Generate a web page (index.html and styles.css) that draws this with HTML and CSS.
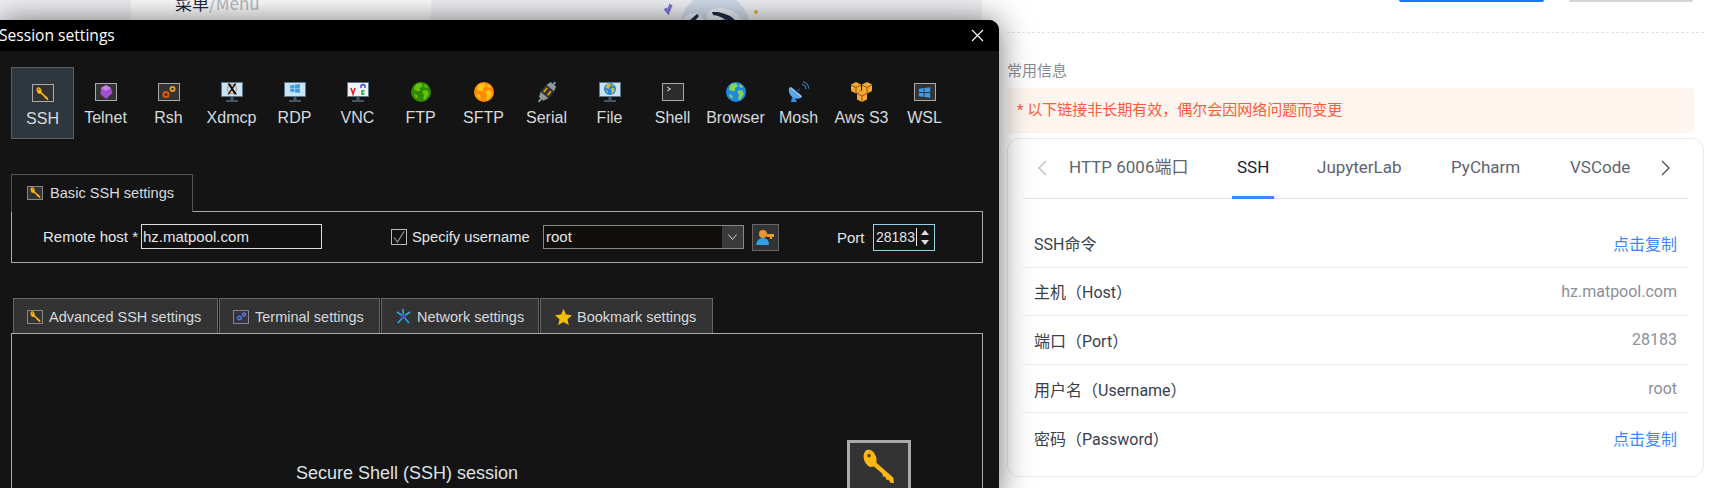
FILE: index.html
```html
<!DOCTYPE html>
<html lang="zh-CN">
<head>
    <meta charset="UTF-8">
    <title>Session settings</title>
    <link rel="stylesheet" href="styles.css">
</head>
<body>
    <svg class="defs" width="0" height="0">
        <symbol id="key" viewBox="0 0 16 16">
            <ellipse cx="3.800" cy="4.400" rx="2.900" ry="4.200" transform="rotate(-18 3.800 4.400)" fill="#fdb813"/>
            <path d="M4.800 7.500 6.500 6.200 14.800 13.500 15 16 13.500 16 12.500 14.500 11.500 14.500 11 13 10 13 9.500 11.500Z" fill="#fdb813"/>
            <circle cx="3.300" cy="3.100" r=".9" fill="#6b4a00"/>
        </symbol>
        <symbol id="win" viewBox="0 0 16 16">
            <path d="M1 3.500 7 2.600V7.500H1ZM8 2.400 15 1.400V7.500H8ZM1 8.500H7V13.400L1 12.500ZM8 8.500H15V14.600L8 13.600Z" fill="#3a9bec"/>
        </symbol>
        <symbol id="monitor" viewBox="0 0 22 20">
            <rect x="0" y="0" width="22" height="15" fill="#5e7685"/>
            <rect x="1" y="1" width="20" height="13" fill="#c6e4f8"/>
            <rect x="9.500" y="15" width="3" height="3" fill="#44565f"/>
            <rect x="5" y="18" width="12" height="2" fill="#44565f"/>
        </symbol>
        <symbol id="globe" viewBox="0 0 20 20">
            <circle cx="10" cy="10" r="10" fill="currentColor"/>
            <path d="M5 2 10 1 12 4 9 6 9 9 5 9 3 7ZM11 9 16 8 18 12 14 18 12 17 13 13ZM14 2 17 5 15 6 13 4ZM3 12 6 13 7 17 4 15Z" fill="var(--land)"/>
        </symbol>
    </svg>

    <div class="page-left">
        <div class="menu-card"><span class="menu-zh">菜单</span><span class="menu-en">/Menu</span></div>
        <svg class="art" width="120" height="22" viewBox="0 0 120 22">
            <path d="M25 8.500 28 12 31 4.500" fill="none" stroke="#8076dc" stroke-width="3.400"/>
            <circle cx="75" cy="28" r="35" fill="#d3deee"/>
            <path d="M42 22Q45 12 56 14 64 15 63 22Z" fill="#eef2f8"/>
            <path d="M67 14Q70 7 82 8 97 10 103 22H70Q66 18 67 14Z" fill="#eef2f8"/>
            <path d="M49 21 57 14 59 16 54 22Z" fill="#232c4a"/>
            <path d="M72 12 78 12Q90 14 97 22H88Q82 16 73 15Z" fill="#232c4a"/>
            <path d="M78 22Q82 18 88 20L90 22Z" fill="#2fb8b0"/>
            <circle cx="116" cy="12" r="2" fill="#e8b23c"/>
        </svg>
    </div>

    <main class="page-right">
        <div class="top-btns">
            <span class="top-btn blue"></span>
            <span class="top-btn grey"></span>
        </div>
        <div class="dashed"></div>
        <h3 class="info-title">常用信息</h3>
        <div class="warn">* 以下链接非长期有效，偶尔会因网络问题而变更</div>
        <section class="card">
            <div class="tabs">
                <svg class="chev" width="12" height="18" viewBox="0 0 12 18"><path d="M10 2 3 9 10 16" fill="none" stroke="#b8bcc4" stroke-width="1.400"/></svg>
                <span class="tab t-http">HTTP 6006端口</span>
                <span class="tab t-ssh active">SSH</span>
                <span class="tab t-jup">JupyterLab</span>
                <span class="tab t-py">PyCharm</span>
                <span class="tab t-vs">VSCode</span>
                <svg class="chev next" width="12" height="18" viewBox="0 0 12 18"><path d="M2 2 9 9 2 16" fill="none" stroke="#4b5563" stroke-width="1.400"/></svg>
            </div>
            <div class="rows">
                <div class="row"><span>SSH命令</span><a class="copy">点击复制</a></div>
                <div class="row"><span>主机（Host）</span><span class="val">hz.matpool.com</span></div>
                <div class="row"><span>端口（Port）</span><span class="val">28183</span></div>
                <div class="row"><span>用户名（Username）</span><span class="val">root</span></div>
                <div class="row"><span>密码（Password）</span><a class="copy">点击复制</a></div>
            </div>
        </section>
    </main>

    <div class="dialog">
        <header class="titlebar">
            <span class="title">Session settings</span>
            <svg class="close" width="13" height="13" viewBox="0 0 13 13"><path d="M1 1 12 12M12 1 1 12" stroke="#fff" stroke-width="1.100"/></svg>
        </header>
        <div class="body">
            <nav class="tools">
                <div class="tool on">
                    <span class="ico"><span class="box"><svg width="13" height="13"><use href="#key"/></svg></span></span>
                    <span class="lbl">SSH</span>
                </div>
                <div class="tool">
                    <span class="ico"><span class="box"><svg width="14" height="14" viewBox="0 0 14 14"><path d="M7 0 12 3 13.500 8 7 14 1.500 9 2 3Z" fill="#a24fd0"/><path d="M7 0 12 3 7 6 2 3Z" fill="#c583e6"/></svg></span></span>
                    <span class="lbl">Telnet</span>
                </div>
                <div class="tool">
                    <span class="ico"><span class="box"><svg width="18" height="14" viewBox="0 0 18 14"><circle cx="6" cy="9.500" r="2.600" fill="none" stroke="#e2570f" stroke-width="2"/><circle cx="12.500" cy="4" r="2.100" fill="none" stroke="#f0a020" stroke-width="1.800"/></svg></span></span>
                    <span class="lbl">Rsh</span>
                </div>
                <div class="tool">
                    <span class="ico"><svg class="mon" width="22" height="20"><use href="#monitor"/></svg>
                        <svg class="on-screen" width="16" height="12" viewBox="0 0 16 11"><circle cx="8" cy="5.500" r="4.600" fill="none" stroke="#e8905a" stroke-width="1.200"/><path d="M3.500 0 6 0 13 11 10.500 11ZM10.500 0 12.500 0 5 11 3.500 11Z" fill="#111"/></svg></span>
                    <span class="lbl">Xdmcp</span>
                </div>
                <div class="tool">
                    <span class="ico"><svg class="mon" width="22" height="20"><use href="#monitor"/></svg>
                        <svg class="on-screen" width="11" height="11"><use href="#win"/></svg></span>
                    <span class="lbl">RDP</span>
                </div>
                <div class="tool">
                    <span class="ico"><svg class="mon" width="22" height="20"><use href="#monitor"/></svg>
                        <svg class="on-screen" width="20" height="13" viewBox="0 0 20 13"><rect width="20" height="13" fill="#eef4fa"/><path d="M3 5 5 11 7 5" fill="none" stroke="#e02020" stroke-width="1.600"/><path d="M13 5V2.500Q15 .8 17 2.500V5" fill="none" stroke="#3a50e0" stroke-width="1.500"/><path d="M16.500 8H14V11H16.500" fill="none" stroke="#20a020" stroke-width="1.500"/></svg></span>
                    <span class="lbl">VNC</span>
                </div>
                <div class="tool">
                    <span class="ico"><svg class="globe g-ftp" width="20" height="20"><use href="#globe"/></svg></span>
                    <span class="lbl">FTP</span>
                </div>
                <div class="tool">
                    <span class="ico"><svg class="globe g-sftp" width="20" height="20"><use href="#globe"/></svg></span>
                    <span class="lbl">SFTP</span>
                </div>
                <div class="tool">
                    <span class="ico"><svg width="24" height="24" viewBox="0 0 24 24"><g transform="rotate(40 12 12)"><path d="M11 -1H13V2H15.500L17 7H7L8.500 2H11Z" fill="#8d979e"/><rect x="6.500" y="7" width="11" height="9" fill="#2f3438"/><path d="M9.500 9V14M14.500 9V14" stroke="#f2a100" stroke-width="1.600"/><path d="M7 16H17L15 21H13V25H11V21H9Z" fill="#8d979e"/></g></svg></span>
                    <span class="lbl">Serial</span>
                </div>
                <div class="tool">
                    <span class="ico"><svg class="mon" width="22" height="20"><use href="#monitor"/></svg>
                        <svg class="globe g-file on-screen" width="12" height="12"><use href="#globe"/></svg></span>
                    <span class="lbl">File</span>
                </div>
                <div class="tool">
                    <span class="ico"><span class="box shell"><svg width="6" height="6" viewBox="0 0 6 6"><path d="M1 1 4.500 3 1 5" fill="none" stroke="#ddd"/></svg></span></span>
                    <span class="lbl">Shell</span>
                </div>
                <div class="tool">
                    <span class="ico"><svg class="globe g-web" width="20" height="20"><use href="#globe"/></svg></span>
                    <span class="lbl">Browser</span>
                </div>
                <div class="tool">
                    <span class="ico"><svg width="22" height="22" viewBox="0 0 22 22"><path d="M1 7 13 17Q7 19 3 15 0 11 1 7Z" fill="#5aa6ea"/><path d="M1 7 13 17 14 15 3 6Z" fill="#8cc6f6"/><path d="M4 16 3 21H9L7 17Z" fill="#2f8fe0"/><path d="M8 11 12 8" stroke="#1d4f80" stroke-width="1.500"/><path d="M14 3Q18 4 18 8M15 .8Q20.500 2 20.600 7.500" fill="none" stroke="#3a8fd8"/></svg></span>
                    <span class="lbl">Mosh</span>
                </div>
                <div class="tool">
                    <span class="ico"><svg width="23" height="20" viewBox="0 0 23 20"><g id="cube"><path d="M6 0 11 2.500 11 9 6 11.500 1 9 1 2.500Z" fill="#f5a733"/><path d="M1 3 6 5.500 11 3M6 5.500V11" fill="none" stroke="#8a5a12"/></g><use href="#cube" x="11"/><use href="#cube" x="6" y="8.500"/></svg></span>
                    <span class="lbl">Aws S3</span>
                </div>
                <div class="tool">
                    <span class="ico"><span class="box"><svg width="13" height="13"><use href="#win"/></svg></span></span>
                    <span class="lbl">WSL</span>
                </div>
            </nav>

            <div class="basic-tab">
                <span class="tab-ico"><svg width="11" height="11"><use href="#key"/></svg></span>
                <span>Basic SSH settings</span>
            </div>
            <div class="basic-panel">
                <label class="host-lbl">Remote host *</label>
                <span class="field host">hz.matpool.com</span>
                <span class="check"><svg width="14" height="14" viewBox="0 0 14 14"><path d="M2 7.500 5.500 12 12 1.500" fill="none" stroke="#999" stroke-width="1.200"/></svg></span>
                <label class="user-lbl">Specify username</label>
                <span class="select"><span class="sel-text">root</span><span class="sel-arrow"><svg width="9" height="6" viewBox="0 0 9 6"><path d="M.5 .5 4.500 5.500 8.500 .5" fill="none" stroke="#ccc"/></svg></span></span>
                <span class="user-btn"><svg width="19" height="17" viewBox="0 0 19 17"><circle cx="7" cy="5" r="4" fill="#e8962e"/><path d="M0 16Q1 9 7 9 13 9 13 16Z" fill="#2f9fe8"/><path d="M11 5H18V8H16V10H14V8H11Z" fill="#f29a1d"/></svg></span>
                <label class="port-lbl">Port</label>
                <span class="port"><span class="port-val">28183</span><span class="spin"><svg width="8" height="5"><path d="M4 0 8 5H0Z" fill="#ddd"/></svg><svg width="8" height="5"><path d="M0 0H8L4 5Z" fill="#ddd"/></svg></span></span>
            </div>

            <div class="lower-tabs">
                <div class="ltab w1"><span class="tab-ico"><svg width="11" height="11"><use href="#key"/></svg></span>Advanced SSH settings</div>
                <div class="ltab w2"><span class="tab-ico blue-gear"><svg width="11" height="11" viewBox="0 0 11 11"><circle cx="3.500" cy="7" r="1.800" fill="none" stroke="#3f7fd8" stroke-width="1.400"/><circle cx="8" cy="3.500" r="1.500" fill="none" stroke="#6a78e0" stroke-width="1.300"/></svg></span>Terminal settings</div>
                <div class="ltab w3"><svg class="ltab-svg" width="17" height="17" viewBox="0 0 17 17"><path d="M8.500 8.500 8 1M8.500 8.500 2 4M8.500 8.500 15 4M8.500 8.500 3 15M8.500 8.500 14 15" stroke="#22b0d0" stroke-width="1.600"/><circle cx="8.500" cy="8.500" r="2.600" fill="#3f55c8"/></svg>Network settings</div>
                <div class="ltab w4"><svg class="ltab-svg" width="17" height="16" viewBox="0 0 17 16"><path d="M8.500 0 11 5.500 17 6.200 12.500 10.200 13.800 16 8.500 13 3.200 16 4.500 10.200 0 6.200 6 5.500Z" fill="#f2c200"/></svg>Bookmark settings</div>
            </div>
            <div class="lower-panel">
                <div class="desc">
                    <span class="desc-text">Secure Shell (SSH) session</span>
                    <span class="big-key"><svg width="34" height="34"><use href="#key"/></svg></span>
                </div>
            </div>
        </div>
    </div>
</body>
</html>
```

FILE: styles.css
```css
* {
    margin: 0;
    padding: 0;
    box-sizing: border-box;
}

html, body {
    width: 1716px;
    height: 488px;
    overflow: hidden;
    background: #fff;
}

body {
    display: flex;
    font-family: "Liberation Sans", Arial, sans-serif;
}

.defs {
    position: absolute;
}

/* page behind the dialog */
.page-left {
    width: 982px;
    height: 488px;
    flex: none;
    background: #f3f4f8;
    position: relative;
    overflow: hidden;
}

.menu-card {
    width: 300px;
    height: 60px;
    margin: -6px 0 0 131px;
    padding-left: 44px;
    background: #fff;
    font: 17px "Noto Sans CJK SC", sans-serif;
    line-height: 17px;
}

.menu-zh {
    color: #1e2a44;
}

.menu-en {
    color: #b8bcc6;
}

.art {
    position: absolute;
    left: 640px;
    top: 0;
    overflow: visible;
}

.page-right {
    flex: 1;
    font-family: Roboto, "Noto Sans CJK SC", sans-serif;
    padding: 0 12px 0 25px;
}

.top-btns {
    display: flex;
    height: 1px;
    margin-left: 392px;
    gap: 25px;
}

.top-btn {
    height: 2px;
    border-radius: 0 0 2px 2px;
}

.top-btn.blue {
    width: 145px;
    background: #1677ff;
}

.top-btn.grey {
    width: 124px;
    background: #d5d5d5;
}

.dashed {
    margin-top: 31px;
    border-top: 1px dashed #dfe4f0;
}

.info-title {
    margin-top: 28px;
    height: 20px;
    font-size: 15px;
    line-height: 20px;
    font-weight: 400;
    color: #858b95;
}

.warn {
    width: 687px;
    height: 45px;
    margin-top: 7px;
    padding-left: 10px;
    border-radius: 3px;
    background: #fdf5ee;
    color: #fb5b3a;
    font-size: 15px;
    line-height: 45px;
}

.card {
    width: 697px;
    height: 339px;
    margin-top: 5px;
    padding: 0 15px;
    border: 1px solid #e8eaee;
    border-radius: 12px;
    background: #fff;
}

.tabs {
    height: 60px;
    border-bottom: 1px solid #e2e8f0;
    position: relative;
    font-size: 17px;
    color: #5d6470;
}

.chev {
    position: absolute;
    left: 13px;
    top: 20px;
}

.chev.next {
    left: 637px;
}

.tab {
    position: absolute;
    top: 13px;
    line-height: 30px;
    white-space: nowrap;
}

.t-http { left: 46px; }
.t-ssh { left: 214px; }
.t-jup { left: 294px; }
.t-py { left: 428px; }
.t-vs { left: 547px; }

.tab.active {
    color: #14233c;
}

.tab.active::after {
    content: "";
    position: absolute;
    left: -5px;
    right: -5px;
    top: 44px;
    height: 3px;
    background: #3d84ff;
}

.rows {
    padding-top: 20px;
}

.row {
    height: 48.600px;
    padding: 0 11px;
    border-bottom: 1px solid #ececef;
    display: flex;
    align-items: center;
    justify-content: space-between;
    font-size: 16px;
    color: #39404c;
}

.row:last-child {
    border-bottom: 0;
}

.val {
    color: #8a8f99;
}

.copy {
    color: #3d84ff;
}

/* MobaXterm dialog, a window over the page */
.dialog {
    position: absolute;
    left: -2px;
    top: 20px;
    width: 1001px;
    height: 480px;
    background: #141414;
    border-radius: 0 10px 0 0;
    box-shadow: 0 0 32px rgba(0, 0, 0, .55);
    overflow: hidden;
}

.titlebar {
    height: 31px;
    background: #000;
    display: flex;
    align-items: center;
    justify-content: space-between;
    padding: 0 15px 2px 0;
}

.title {
    color: #fff;
    font: 15.600px "Open Sans", sans-serif;
    padding-left: 1px;
}

.close {
    margin-top: 2px;
}

.body {
    padding: 16px 0 0 13px;
}

.tools {
    display: flex;
    height: 72px;
    color: #d6dade;
}

.tool {
    width: 63px;
    height: 72px;
    display: flex;
    flex-direction: column;
    align-items: center;
    padding-top: 14px;
}

.tool.on {
    background: #2f373e;
    border: 1px solid #5a5f63;
}

.ico {
    height: 22px;
    position: relative;
    display: flex;
    align-items: center;
    justify-content: center;
    width: 24px;
}

.box {
    width: 22px;
    height: 18px;
    border: 1px solid #aaa;
    background: #333;
    display: flex;
    align-items: center;
    justify-content: center;
}

.box.shell {
    background: #2c2c2c;
    align-items: flex-start;
    justify-content: flex-start;
    padding: 2px 0 0 3px;
}

.mon {
    display: block;
}

.on-screen {
    position: absolute;
    left: 50%;
    top: 2px;
    transform: translateX(-50%);
}

.globe {
    display: block;
}

.g-ftp { color: #2f8a00; --land: #63c410; }
.g-sftp { color: #ff8c00; --land: #ffc61a; }
.g-file { color: #2b7fd8; --land: #d8c23a; }
.g-web { color: #1e88e5; --land: #8bd44a; }

.lbl {
    font-size: 16px;
    line-height: 18px;
    margin-top: 6px;
    white-space: nowrap;
}

.basic-tab {
    width: 182px;
    height: 38px;
    margin-top: 35px;
    padding: 0 0 2px 15px;
    border: 1px solid #555;
    border-bottom: 0;
    display: flex;
    align-items: center;
    gap: 7px;
    background: #141414;
    color: #d8dbde;
    font-size: 14.600px;
    position: relative;
    z-index: 1;
}

.tab-ico {
    width: 16px;
    height: 14px;
    border: 1px solid #888;
    background: #333;
    display: flex;
    align-items: center;
    justify-content: center;
    flex: none;
}

.blue-gear {
    background: #334;
}

.basic-panel {
    width: 972px;
    height: 52px;
    margin-top: -1px;
    border: 1px solid #aaa;
    position: relative;
    color: #e4e6e8;
    display: flex;
    align-items: center;
    font-size: 15px;
}

.host-lbl {
    margin: 0 0 1px 31px;
    width: 98px;
    white-space: nowrap;
}

.field {
    width: 181px;
    height: 25px;
    border: 1px solid #ddd;
    background: #111;
    padding-left: 1px;
    line-height: 23px;
    margin-bottom: 1px;
}

.check {
    width: 16px;
    height: 16px;
    margin-left: 69px;
    border: 1px solid #bbb;
    display: flex;
    align-items: center;
    justify-content: center;
}

.user-lbl {
    margin-left: 5px;
    width: 131px;
    font-size: 14.700px;
}

.select {
    width: 201px;
    height: 24px;
    border: 1px solid #888;
    background: #110f0c;
    display: flex;
    justify-content: space-between;
    line-height: 22px;
    margin-bottom: 1px;
    padding-left: 2px;
}

.sel-arrow {
    width: 21px;
    background: #3a3a3a;
    display: flex;
    align-items: center;
    justify-content: center;
}

.user-btn {
    width: 27px;
    height: 27px;
    margin-left: 8px;
    border: 1px solid #666;
    background: #333;
    display: flex;
    align-items: center;
    justify-content: center;
}

.port-lbl {
    margin-left: 58px;
    width: 36px;
}

.port {
    width: 62px;
    height: 27px;
    border: 1px solid #8fd3e6;
    display: flex;
    padding-left: 2px;
    line-height: 23px;
    justify-content: space-between;
    font-size: 14px;
}

.port-val {
    border-right: 1px solid #eee;
    height: 18px;
    margin-top: 3px;
    line-height: 18px;
    padding-right: 1px;
}

.spin {
    width: 20px;
    display: flex;
    flex-direction: column;
    align-items: center;
    justify-content: center;
    gap: 5px;
}

.spin svg {
    display: block;
}

.lower-tabs {
    display: flex;
    margin: 35px 0 0 2px;
    height: 36px;
}

.ltab {
    height: 36px;
    background: #333;
    border: 1px solid #666;
    margin-right: 1px;
    color: #d6dade;
    font-size: 14.500px;
    display: flex;
    align-items: center;
    gap: 6px;
    padding: 1px 0 0 13px;
    white-space: nowrap;
}

.w1 { width: 205px; }
.w2 { width: 161px; }
.w3 { width: 158px; padding-left: 13px; gap: 5px; }
.w4 { width: 173px; padding-left: 14px; gap: 5px; }

.lower-panel {
    width: 972px;
    height: 200px;
    margin-top: -1px;
    border: 1px solid #aaa;
    position: relative;
}

.desc-text {
    position: absolute;
    left: 284px;
    top: 129px;
    font-size: 18px;
    color: #dfe2e5;
}

.big-key {
    position: absolute;
    left: 835px;
    top: 106px;
    width: 64px;
    height: 64px;
    border: 3px solid #aaa;
    background: #333;
    display: flex;
    justify-content: center;
    padding-top: 6px;
}
```
